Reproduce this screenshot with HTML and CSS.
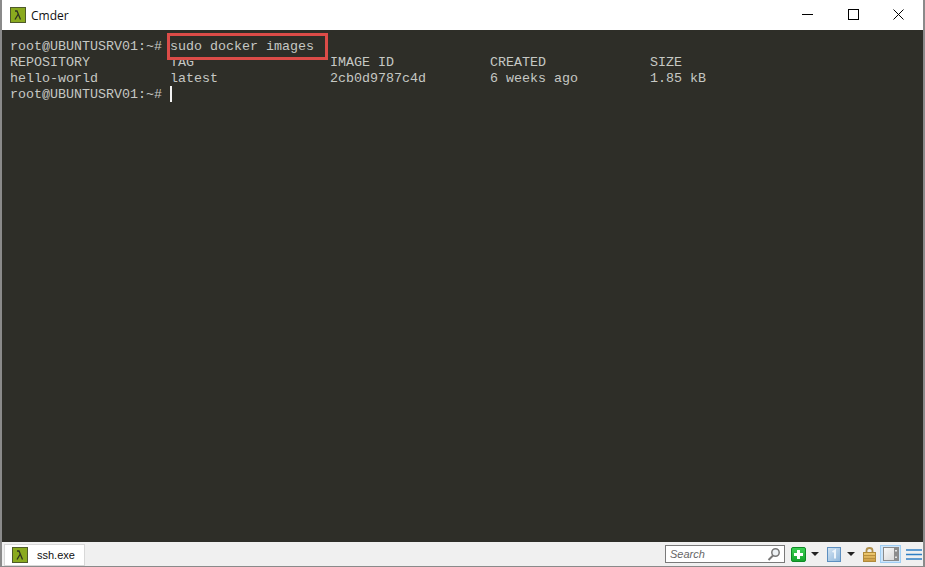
FILE: index.html
```html
<!DOCTYPE html>
<html lang="en">
<head>
<meta charset="utf-8">
<title>Cmder</title>
<link rel="stylesheet" href="styles.css">
</head>
<body>
<div class="window">
  <header class="titlebar">
    <svg class="lambda-icon" width="16" height="16" viewBox="0 0 16 16"><rect x="0.5" y="0.5" width="15" height="15" fill="#8aaa1e" stroke="#4e5a2a"/><path d="M5 4h2l3.500 8.500M8 7.500 5 12.500" fill="none" stroke="#2e3320" stroke-width="1.300"/></svg>
    <span class="title">Cmder</span>
    <div class="controls">
      <svg width="11" height="11" viewBox="0 0 11 11"><path d="M0 5.500h11" stroke="#000"/></svg>
      <svg width="11" height="11" viewBox="0 0 11 11"><rect x="0.500" y="0.500" width="10" height="10" fill="none" stroke="#000"/></svg>
      <svg width="11" height="11" viewBox="0 0 11 11"><path d="M0.500 0.500l10 10M10.500 0.500l-10 10" stroke="#000" stroke-width="1"/></svg>
    </div>
  </header>
  <main class="terminal">
    <div class="line"><span class="col">root@UBUNTUSRV01:~#</span><span class="command">sudo docker images</span></div>
    <div class="line"><span class="col">REPOSITORY</span><span class="col">TAG</span><span class="col">IMAGE ID</span><span class="col">CREATED</span><span>SIZE</span></div>
    <div class="line"><span class="col">hello-world</span><span class="col">latest</span><span class="col">2cb0d9787c4d</span><span class="col">6 weeks ago</span><span>1.85 kB</span></div>
    <div class="line"><span class="col">root@UBUNTUSRV01:~#</span><span class="cursor"></span></div>
  </main>
  <footer class="statusbar">
    <div class="tab">
      <svg width="16" height="16" viewBox="0 0 16 16"><rect x="0.500" y="0.500" width="15" height="15" fill="#8aaa1e" stroke="#4e5a2a"/><path d="M5 4h2l3.500 8.500M8 7.500 5 12.500" fill="none" stroke="#2e3320" stroke-width="1.300"/></svg>
      <span>ssh.exe</span>
    </div>
    <div class="tools">
      <div class="search"><span>Search</span>
        <svg width="14" height="14" viewBox="0 0 14 14"><circle cx="8.500" cy="5.500" r="3.700" fill="#eef2f5" stroke="#777" stroke-width="1.500"/><path d="M6 8.500 1.500 13" stroke="#777" stroke-width="2"/></svg>
      </div>
      <svg class="tool-add" width="15" height="15" viewBox="0 0 15 15"><defs><linearGradient id="addFill" x1="0" y1="0" x2="0" y2="1"><stop offset="0" stop-color="#3fd357"/><stop offset="1" stop-color="#14a32c"/></linearGradient></defs><rect x="0.500" y="0.500" width="14" height="14" rx="1.500" fill="url(#addFill)" stroke="#0f8a25"/><path d="M7.500 3v9M3 7.500h9" stroke="#fff" stroke-width="3"/></svg>
      <span class="caret"></span>
      <svg class="tool-one" width="14" height="15" viewBox="0 0 14 15"><defs><linearGradient id="oneFill" x1="0" y1="0" x2="1" y2="1"><stop offset="0" stop-color="#d3e4f3"/><stop offset="1" stop-color="#8fb6da"/></linearGradient></defs><rect x="0.500" y="0.500" width="13" height="14" fill="url(#oneFill)" stroke="#5d8fc0"/><path d="M5.500 5 8 3.500v8" fill="none" stroke="#eef5fb" stroke-width="2"/></svg>
      <span class="caret caret-last"></span>
      <svg class="tool-lock" width="13" height="15" viewBox="0 0 13 15"><defs><linearGradient id="lockFill" x1="0" y1="0" x2="0" y2="1"><stop offset="0" stop-color="#f0cc72"/><stop offset="1" stop-color="#c99a42"/></linearGradient></defs><path d="M3.500 6V3.500a3 2.500 0 0 1 6 0V6" fill="none" stroke="#b0904a" stroke-width="1.800"/><rect x="0.500" y="5.500" width="12" height="9" fill="url(#lockFill)" stroke="#b08a3a"/><path d="M1 8.500h11M1 11.500h11" stroke="#b98f3d"/></svg>
      <div class="split"><svg width="16" height="14" viewBox="0 0 16 14"><defs><linearGradient id="splitFill" x1="0" y1="0" x2="1" y2="1"><stop offset="0" stop-color="#fafafa"/><stop offset="1" stop-color="#d2d2d2"/></linearGradient></defs><rect x="0.500" y="0.500" width="15" height="13" fill="url(#splitFill)" stroke="#8a8a8a"/><rect x="11" y="1" width="4" height="12" fill="#8c8c8c"/><path d="M13 3v1.500M13 9.500V11" stroke="#fff" stroke-width="1.500"/></svg></div>
      <svg class="tool-menu" width="16" height="11" viewBox="0 0 16 11"><path d="M0 1h16M0 5.500h16M0 10h16" stroke="#2f7fc4" stroke-width="1.700"/></svg>
    </div>
  </footer>
</div>
</body>
</html>
```
FILE: styles.css
```css
html, body { margin: 0; padding: 0; width: 925px; height: 567px; overflow: hidden; background: #fff; }
.window { box-sizing: border-box; width: 925px; height: 567px; display: flex; flex-direction: column; border-left: 2px solid #8a8a8a; border-right: 2px solid #8a8a8a; border-bottom: 1px solid #8a8a8a; font-family: "Liberation Sans", sans-serif; }
.titlebar { flex: 0 0 30px; display: flex; align-items: center; padding-left: 8px; background: #fff; }
.lambda-icon { margin-top: -1px; }
.title { margin-left: 5px; font: 12px "Open Sans", "Liberation Sans", sans-serif; color: #111; }
.controls { margin-left: auto; margin-bottom: 2px; display: flex; align-items: center; gap: 34.500px; padding-right: 19px; }
.terminal { flex: 1; background: #2e2e28; padding-top: 9px; padding-left: 8px; font: 13.330px/16px "Liberation Mono", monospace; color: #c6c8c4; }
.line { display: flex; height: 16px; white-space: pre; }
.col { width: 160px; flex: none; }
.command { position: relative; }
.command::after { content: ""; position: absolute; left: -3px; top: -6px; width: 161px; height: 27px; box-sizing: border-box; border: 3px solid #dc4c48; }
.cursor { width: 2px; height: 16px; margin-top: -1px; background: #f2f2f2; }
.statusbar { flex: 0 0 24px; display: flex; align-items: center; justify-content: space-between; background: #f0f0f0; }
.tab { display: flex; align-items: center; gap: 9px; align-self: flex-start; box-sizing: border-box; height: 22px; margin-top: 2px; margin-left: 2px; width: 81px; padding-left: 7px; background: #fff; border: 1px solid #d8d8d8; font-size: 11px; color: #111; }
.tools { display: flex; align-items: center; padding-right: 1px; }
.search { box-sizing: border-box; width: 120px; height: 18px; display: flex; align-items: center; justify-content: space-between; padding: 0 3px 0 4px; background: #fff; border: 1px solid #7a7a7a; font: italic 11px "Liberation Sans", sans-serif; color: #666; }
.tool-add { margin-left: 6px; }
.caret { width: 0; height: 0; margin: 0 8px 0 5px; border-left: 4px solid transparent; border-right: 4px solid transparent; border-top: 4px solid #222; }
.caret-last { margin-left: 6px; }
.split { box-sizing: border-box; width: 21px; height: 18px; margin-left: 4px; display: flex; align-items: center; justify-content: center; background: #cde6fb; border: 1px solid #9fcdf2; }
.tool-menu { margin-left: 5px; }
```
